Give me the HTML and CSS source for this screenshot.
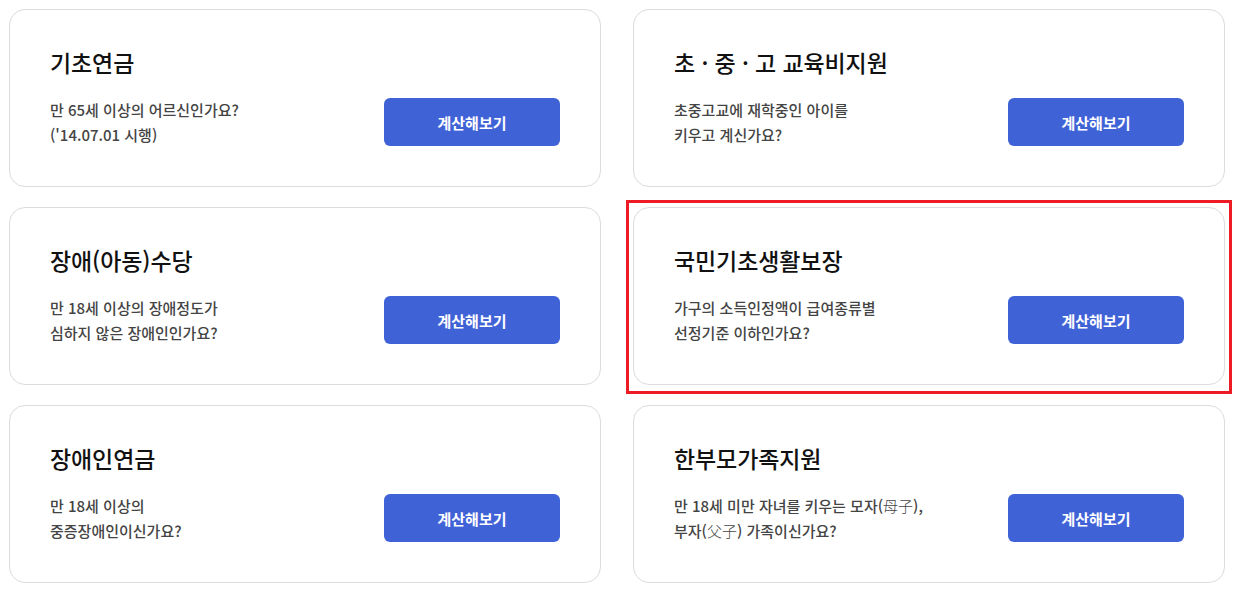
FILE: index.html
```html
<!DOCTYPE html>
<html lang="ko">
<head>
<meta charset="utf-8">
<title>계산해보기</title>
<link rel="stylesheet" href="styles.css">
</head>
<body>
<div class="grid">
  <div class="card">
    <h2 class="title">기초연금</h2>
    <div class="row">
      <p class="desc">만 65세 이상의 어르신인가요?<br>('14.07.01 시행)</p>
      <button class="btn">계산해보기</button>
    </div>
  </div>
  <div class="card">
    <h2 class="title">초 · 중 · 고 교육비지원</h2>
    <div class="row">
      <p class="desc">초중고교에 재학중인 아이를<br>키우고 계신가요?</p>
      <button class="btn">계산해보기</button>
    </div>
  </div>
  <div class="card">
    <h2 class="title">장애(아동)수당</h2>
    <div class="row">
      <p class="desc">만 18세 이상의 장애정도가<br>심하지 않은 장애인인가요?</p>
      <button class="btn">계산해보기</button>
    </div>
  </div>
  <div class="card card-active">
    <h2 class="title">국민기초생활보장</h2>
    <div class="row">
      <p class="desc">가구의 소득인정액이 급여종류별<br>선정기준 이하인가요?</p>
      <button class="btn">계산해보기</button>
    </div>
  </div>
  <div class="card">
    <h2 class="title">장애인연금</h2>
    <div class="row">
      <p class="desc">만 18세 이상의<br>중증장애인이신가요?</p>
      <button class="btn">계산해보기</button>
    </div>
  </div>
  <div class="card">
    <h2 class="title">한부모가족지원</h2>
    <div class="row">
      <p class="desc">만 18세 미만 자녀를 키우는 모자(<span class="hanja">母子</span>),<br>부자(<span class="hanja">父子</span>) 가족이신가요?</p>
      <button class="btn">계산해보기</button>
    </div>
  </div>
</div>
</body>
</html>
```

FILE: styles.css
```css
* { box-sizing: border-box; }

html, body {
  margin: 0;
  padding: 0;
  background: #fff;
}

body {
  font-family: "Noto Sans CJK KR", "Noto Sans", sans-serif;
  color: #111;
}

.grid {
  display: grid;
  grid-template-columns: 592px 592px;
  column-gap: 32px;
  row-gap: 20px;
  padding: 9px 0 0 9px;
}

.card {
  position: relative;
  height: 178px;
  border: 1px solid #dcdcdc;
  border-radius: 16px;
  background: #fff;
  padding: 36px 40px 0 40px;
}

.card-active::after {
  content: "";
  position: absolute;
  top: -8px;
  left: -8px;
  right: -8px;
  bottom: -10px;
  border: 3px solid #ed1c24;
  pointer-events: none;
}

.title {
  margin: 0;
  font-size: 23px;
  line-height: 32px;
  font-weight: 500;
  color: #111;
  letter-spacing: -0.1px;
}

.row {
  display: flex;
  align-items: center;
  justify-content: space-between;
  margin-top: 20px;
  height: 48px;
}

.desc {
  margin: 0;
  font-size: 15px;
  line-height: 25px;
  font-weight: 500;
  color: #444;
  letter-spacing: 0;
}

.hanja {
  font-family: "Noto Sans CJK TC", "Noto Sans CJK KR", sans-serif;
  font-weight: 300;
}

.btn {
  flex: none;
  width: 176px;
  height: 48px;
  border: none;
  border-radius: 6px;
  background: #3f62d7;
  color: #fff;
  font-family: "Noto Sans CJK KR", "Noto Sans", sans-serif;
  font-size: 15px;
  font-weight: 700;
  letter-spacing: 0;
  padding: 0;
  cursor: pointer;
}
```
